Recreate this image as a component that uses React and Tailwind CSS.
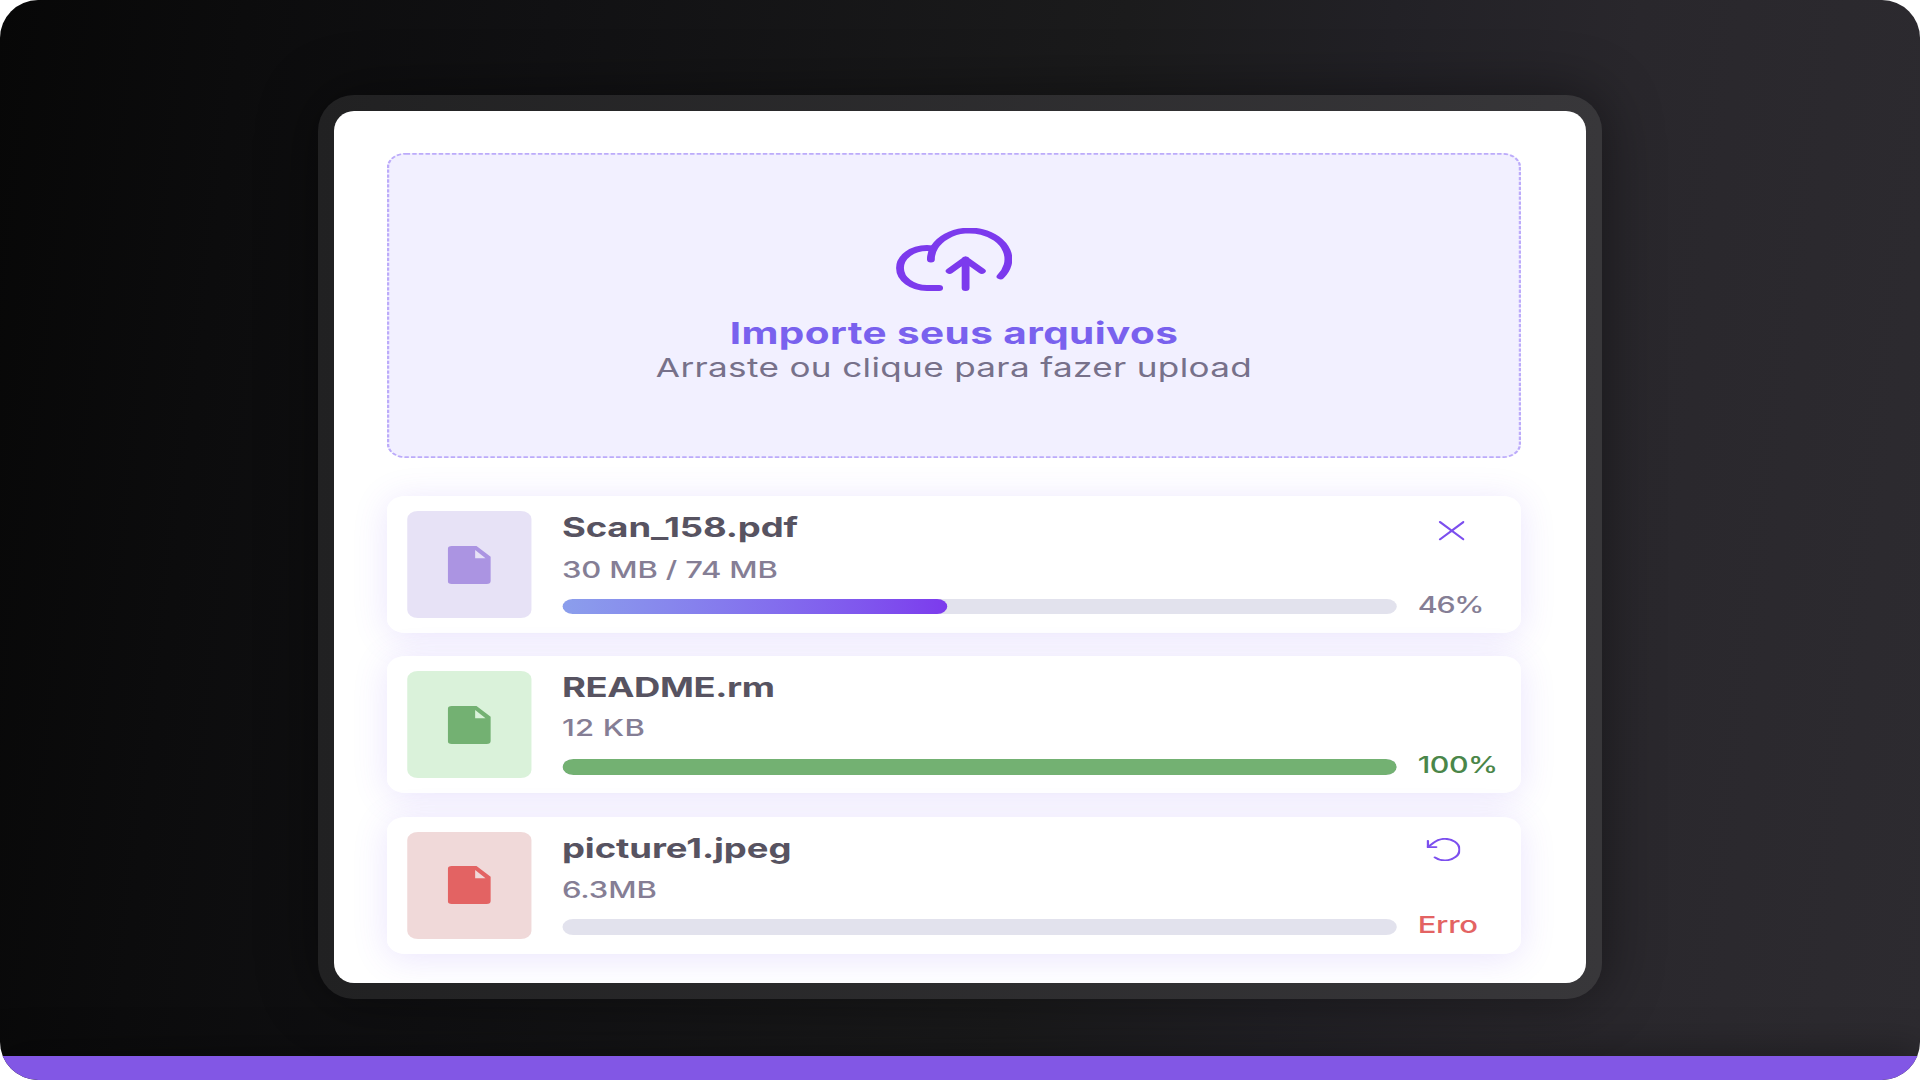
const files = [
  {
    name: "Scan_158.pdf",
    size: "30 MB / 74 MB",
    progress: 46.1,
    status: "46%",
    thumb: "bg-[#e7e2f6]",
    icon: "text-[#ab94e2]",
    fill: "bg-linear-to-r from-[#8b9eec] to-[#7c3aed]",
    statusStyle: "text-[#857e95] text-[22.5px] leading-[27.5px] tracking-[-0.9px]",
    sizeStyle: "pt-[12px] tracking-[-0.12px]",
    nameStyle: "tracking-[-0.1px]",
    action: "close",
  },
  {
    name: "README.rm",
    size: "12 KB",
    progress: 100,
    status: "100%",
    thumb: "bg-[#daf2da]",
    icon: "text-[#73b172]",
    fill: "bg-[#73b172]",
    statusStyle: "text-[#4a8649] text-[22.5px] leading-[27.5px] tracking-[-0.35px]",
    sizeStyle: "pt-[10px] tracking-[0.15px]",
    nameStyle: "tracking-[-0.3px]",
  },
  {
    name: "picture1.jpeg",
    size: "6.3MB",
    progress: 0,
    status: "Erro",
    thumb: "bg-[#f0d9d9]",
    icon: "text-[#e36363]",
    fill: "",
    statusStyle: "text-[#e36363] text-[23px] leading-[29px] tracking-[-0.25px]",
    sizeStyle: "pt-[11.5px] tracking-[-0.1px]",
    nameStyle: "tracking-[-0.05px]",
    action: "retry",
  },
];

function CloudIcon() {
  return (
    <svg width="86.2" height="63" viewBox="0 0 86.2 63" fill="none" stroke="#7c3aed" strokeWidth="5.8" strokeLinecap="round" strokeLinejoin="round">
      <path d="M32 60H23A20 20 0 0 1 23 20Q25 20 26.6 20.3" />
      <path d="M25.9 31.5A28.7 28.7 0 1 1 77.5 48.5" />
      <path d="M51.6 60V31.5M39.8 43L51.6 31.5L63.6 43" />
    </svg>
  );
}

function FileIcon() {
  return (
    <svg width="31.8" height="38" viewBox="0 0 31.8 38" fill="currentColor">
      <path fillRule="evenodd" d="M3 0H21.3L31.8 10.8V35Q31.8 38 28.8 38H3Q0 38 0 35V3Q0 0 3 0ZM20.3 4V12.3H28Z" />
    </svg>
  );
}

function CloseIcon() {
  return (
    <svg width="19.4" height="19.4" viewBox="0 0 19.4 19.4" stroke="#7c4fee" strokeWidth="1.8" strokeLinecap="round">
      <path d="M1 1L18.4 18.4M18.4 1L1 18.4" />
    </svg>
  );
}

function RetryIcon() {
  return (
    <svg width="25.2" height="23.4" viewBox="0 0 25.2 23.4" fill="none" stroke="#7c4fee" strokeWidth="1.8" strokeLinecap="round" strokeLinejoin="round">
      <path d="M1 2.8V9.1H7.2" />
      <path d="M1 9.1L5.6 4.4A10.8 10.8 0 1 1 6.2 19.4" />
    </svg>
  );
}

function DropZone() {
  return (
    <div className="relative flex h-[305px] flex-col items-center rounded-[14px] bg-[#f2f0ff] pt-[75px]">
      <svg className="absolute inset-0 size-full" fill="none">
        <rect x="0.8" y="0.8" width="838.4" height="303.4" rx="13" stroke="#bcabfa" strokeWidth="1.7" strokeDasharray="3.3 1.6" />
      </svg>
      <CloudIcon />
      <h1 className="mt-[24px] text-[30px] leading-[36px] font-bold tracking-[0.3px] whitespace-nowrap text-[#7961ee]">Importe seus arquivos</h1>
      <p className="text-[26px] leading-[34px] tracking-[0.25px] whitespace-nowrap text-[#77718a]">Arraste ou clique para fazer upload</p>
    </div>
  );
}

function FileCard({ file }) {
  return (
    <li className="flex h-[137px] rounded-[14px] bg-white/90 pl-[15px] shadow-[0_4px_30px_rgba(112,72,240,0.15)]">
      <div className={`mt-[15px] flex h-[107px] w-[92px] items-center justify-center rounded-[8px] ${file.thumb} ${file.icon}`}>
        <FileIcon />
      </div>
      <div className="ml-[22.6px] w-[618.7px] pt-[15px]">
        <h2 className={`text-[27px] leading-[33px] font-bold whitespace-nowrap text-[#575361] ${file.nameStyle}`}>{file.name}</h2>
        <div className="h-[54.8px]">
          <p className={`text-[23px] leading-[29px] font-medium whitespace-nowrap text-[#857e95] ${file.sizeStyle}`}>{file.size}</p>
        </div>
        <div className="h-[15.5px] overflow-hidden rounded-full bg-[#e2e2ed]">
          <div className={`h-full rounded-full ${file.fill}`} style={{ width: `${file.progress}%` }} />
        </div>
      </div>
      <div className="ml-[15.2px] w-[72px]">
        <div className="h-[94.6px]">
          {file.action === "close" && (
            <div className="pt-[25.3px] pl-[15.4px]">
              <CloseIcon />
            </div>
          )}
          {file.action === "retry" && (
            <div className="pt-[21.5px] pl-[6.7px]">
              <RetryIcon />
            </div>
          )}
        </div>
        <p className={`font-medium whitespace-nowrap ${file.statusStyle}`}>{file.status}</p>
      </div>
    </li>
  );
}

export default function App() {
  return (
    <div className="h-[1080px] w-[1920px] overflow-hidden bg-white font-[Inter,sans-serif]">
      <div className="flex h-full flex-col items-center overflow-hidden rounded-[38px] bg-[linear-gradient(97deg,#070707_0%,#0c0c0d_12%,#111113_27%,#1b1b1c_55%,#222126_68%,#29272c_80%,#2d2b30_100%)]">
        <main className="mt-[95px] h-[904px] w-[1284px] shrink-0 rounded-[36px] bg-linear-to-r from-[#212122] to-[#38373a] p-4 shadow-[0_0_60px_rgba(0,0,0,0.45)]">
          <div className="h-[872px] overflow-hidden rounded-[20px] bg-white pt-[42px] pl-[53px]">
            <div className="w-[840px] origin-top-left scale-x-[1.35]">
              <DropZone />
              <ul className="mt-[38px] flex flex-col gap-[23.3px]">
                {files.map((file) => (
                  <FileCard key={file.name} file={file} />
                ))}
              </ul>
            </div>
          </div>
        </main>
        <footer className="mt-auto h-6 w-full shrink-0 bg-[#8257e5] shadow-[0_0_40px_rgba(0,0,0,0.5)]" />
      </div>
    </div>
  );
}
